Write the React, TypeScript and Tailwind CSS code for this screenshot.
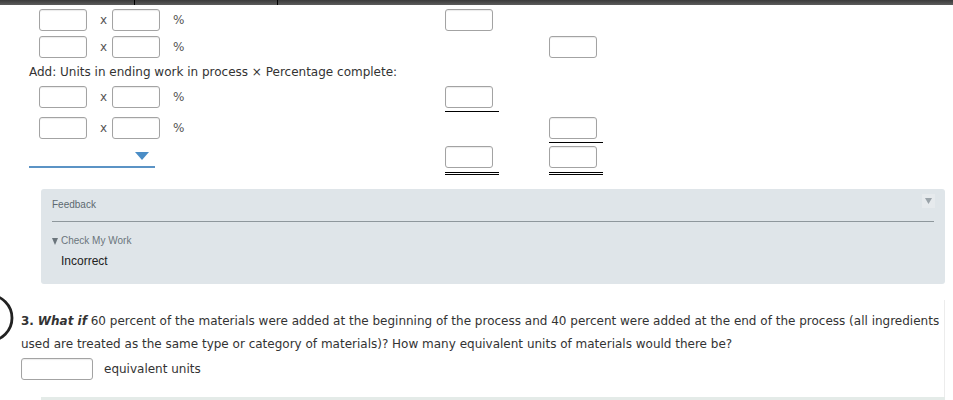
function Input({ className = 'w-[48px]' }: { className?: string }) {
  return (
    <div
      className={`h-[22px] shrink-0 rounded-[3px] border border-[#a3a3a3] bg-white shadow-[inset_0_1px_1px_rgba(0,0,0,0.08)] ${className}`}
    />
  )
}

function Pair() {
  return (
    <div className="flex w-[416px] items-center pl-[10px] text-[12px] text-[#555]">
      <Input />
      <span className="w-[25px] pl-[13px]">x</span>
      <Input />
      <span className="ml-[13px]">%</span>
    </div>
  )
}

function Line() {
  return <div className="h-px w-[54px] bg-black" />
}

export default function App() {
  return (
    <div className="h-[400px] w-[953px] overflow-hidden bg-white font-['DejaVu_Sans',Verdana,sans-serif] text-[#333]">
      {/* top bar */}
      <div className="flex h-[5px] bg-gradient-to-b from-[#3a3a3a] to-[#5c5c5c]">
        <div className="w-[135px] border-r border-black" />
        <div className="w-[143px] border-r border-black" />
      </div>

      {/* worksheet rows */}
      <div className="mt-[4px] flex h-[22px] pl-[29px]">
        <Pair />
        <div className="w-[104px]">
          <Input />
        </div>
      </div>

      <div className="mt-[5px] flex h-[22px] pl-[29px]">
        <Pair />
        <div className="w-[104px]" />
        <div className="w-[104px]">
          <Input />
        </div>
      </div>

      <div className="flex h-[28px] items-center pl-[29px] text-[12px]">
        Add: Units in ending work in process × Percentage complete:
      </div>

      <div className="flex h-[22px] pl-[29px]">
        <Pair />
        <div className="flex w-[104px] flex-col">
          <Input />
          <div className="mt-[3px]">
            <Line />
          </div>
        </div>
      </div>

      <div className="mt-[9px] flex h-[22px] pl-[29px]">
        <Pair />
        <div className="w-[104px]" />
        <div className="flex w-[104px] flex-col">
          <Input />
          <div className="mt-[3px]">
            <Line />
          </div>
        </div>
      </div>

      <div className="mt-[7px] flex h-[22px] pl-[29px]">
        <div className="w-[416px]">
          <div className="flex h-[22px] w-[126px] items-center justify-end border-b-2 border-[#5b93c5] pr-[6px]">
            <svg width="14" height="8" viewBox="0 0 14 8">
              <polygon points="0,0 14,0 7,8" fill="#4a8dc6" />
            </svg>
          </div>
        </div>
        {[0, 1].map((i) => (
          <div key={i} className="flex w-[104px] flex-col">
            <Input />
            <div className="mt-[4px]">
              <Line />
            </div>
            <div className="mt-px">
              <Line />
            </div>
          </div>
        ))}
      </div>

      {/* feedback */}
      <div className="ml-[41px] mt-[21px] h-[95px] w-[904px] rounded-[3px] bg-[#dfe5e9] px-[11px] font-['Liberation_Sans',Arial,sans-serif]">
        <div className="flex h-[33px] items-start justify-between border-b border-[#8e979c] pt-[10px]">
          <span className="text-[10px] leading-[12px] text-[#5d6970]">Feedback</span>
          <div className="-mt-[5px] mr-[-1px] flex h-[14px] w-[13px] items-center justify-center bg-[#e6eaed]">
            <svg width="7" height="6" viewBox="0 0 7 6">
              <polygon points="0,0 7,0 3.5,6" fill="#9aa3a9" />
            </svg>
          </div>
        </div>
        <div className="mt-[13px] flex items-center text-[10px] leading-[12px] text-[#6b757c]">
          <svg width="6" height="7" viewBox="0 0 6 7" className="mr-[3px]">
            <polygon points="0,0 6,0 3,7" fill="#6b757c" />
          </svg>
          Check My Work
        </div>
        <div className="mt-[7px] pl-[9px] text-[12px] leading-[14px] text-[#222]">Incorrect</div>
      </div>

      {/* question 3 */}
      <div className="mt-[16px] flex w-[945px] border-r border-[#ececec]">
        <div className="w-[21px] shrink-0">
          <svg width="14" height="50" viewBox="0 0 14 50" className="-mt-[7px]">
            <circle cx="-11" cy="25" r="23" fill="none" stroke="#222" strokeWidth="2.8" />
          </svg>
        </div>
        <div className="pt-[10px] text-[12px]">
          <p className="whitespace-nowrap leading-[23px]">
            <b>3.</b> <b className="italic">What if</b> 60 percent of the materials were added at the beginning of the
            process and 40 percent were added at the end of the process (all ingredients
            <br />
            used are treated as the same type or category of materials)? How many equivalent units of materials
            would there be?
          </p>
          <div className="mt-[2px] flex items-center">
            <Input className="w-[72px]" />
            <span className="ml-[11px]">equivalent units</span>
          </div>
          <div className="h-[17px]" />
        </div>
      </div>
      <div className="ml-[41px] h-[4px] w-[904px] bg-[#e4ebe8]" />
    </div>
  )
}
